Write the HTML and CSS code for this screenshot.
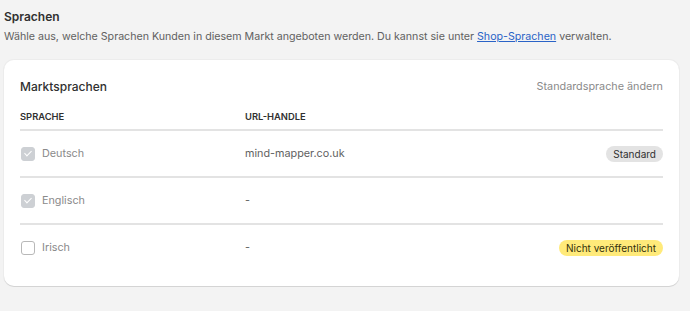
FILE: index.html
```html
<!DOCTYPE html>
<html lang="de">
<head>
    <meta charset="UTF-8">
    <meta name="viewport" content="width=device-width, initial-scale=1.0">
    <title>Sprachen</title>
    <link rel="stylesheet" href="styles.css">
</head>
<body>
    <section class="section-languages">
        <h2 class="section-title">Sprachen</h2>
        <p class="section-desc">Wähle aus, welche Sprachen Kunden in diesem Markt angeboten werden. Du kannst sie unter <a href="#">Shop-Sprachen</a> verwalten.</p>

        <article class="card">
            <div class="card-head">
                <h3>Marktsprachen</h3>
                <button type="button" class="btn-plain">Standardsprache ändern</button>
            </div>

            <div class="lang-table">
                <div class="row row-head">
                    <div class="cell">Sprache</div>
                    <div class="cell">URL-Handle</div>
                    <div class="cell"></div>
                </div>
                <div class="row">
                    <div class="cell cell-lang">
                        <span class="check checked"></span>
                        <span>Deutsch</span>
                    </div>
                    <div class="cell">mind-mapper.co.uk</div>
                    <div class="cell cell-end"><span class="badge">Standard</span></div>
                </div>
                <div class="row">
                    <div class="cell cell-lang">
                        <span class="check checked"></span>
                        <span>Englisch</span>
                    </div>
                    <div class="cell">-</div>
                    <div class="cell cell-end"></div>
                </div>
                <div class="row">
                    <div class="cell cell-lang">
                        <span class="check"></span>
                        <span>Irisch</span>
                    </div>
                    <div class="cell">-</div>
                    <div class="cell cell-end"><span class="badge badge-attention">Nicht veröffentlicht</span></div>
                </div>
            </div>
        </article>
    </section>
</body>
</html>
```

FILE: styles.css
```css
body {
    margin: 0;
    padding: 7px 11px 7px 4px;
    background: #f3f3f3;
    font-family: Inter, "Liberation Sans", sans-serif;
    color: #303030;
}

.section-title {
    margin: 0;
    font-size: 12px;
    line-height: 20px;
    font-weight: 600;
}

.section-desc {
    margin: 0 0 13px;
    font-size: 10.65px;
    line-height: 20px;
    color: #616161;
}

.section-desc a {
    color: #2a63c7;
}

.card {
    padding: 16px;
    background: #fff;
    border-radius: 10px;
    box-shadow: 0 1px 0 #d4d4d4, 0 0 0 1px #ececec;
}

.card-head {
    display: flex;
    justify-content: space-between;
    align-items: center;
    height: 20px;
    margin-bottom: 12px;
}

.card-head h3 {
    margin: 0;
    font-size: 12px;
    font-weight: 500;
}

.btn-plain {
    padding: 0;
    border: 0;
    background: none;
    font: inherit;
    font-size: 10.8px;
    color: #8a8a8a;
}

.row {
    display: grid;
    grid-template-columns: 225px 1fr auto;
    align-items: center;
    height: 45px;
    border-top: 2px solid #e3e3e3;
    font-size: 10.8px;
    color: #616161;
}

.row-head {
    height: 16px;
    padding-bottom: 5px;
    border-top: 0;
    font-size: 9.4px;
    font-weight: 600;
    text-transform: uppercase;
    color: #303030;
}

.cell-lang {
    display: flex;
    align-items: center;
    gap: 7px;
    color: #8a8a8a;
}

.check {
    box-sizing: border-box;
    width: 14px;
    height: 14px;
    margin-left: 1px;
    border: 1px solid #b8b8b8;
    border-radius: 3px;
    background: #fff;
    position: relative;
}

.check.checked {
    border-color: #cdd0d4;
    background: #cdd0d4;
}

.check.checked::after {
    content: "";
    position: absolute;
    left: 4px;
    top: 1.5px;
    width: 3px;
    height: 6px;
    border: solid #fff;
    border-width: 0 1.5px 1.5px 0;
    transform: rotate(45deg);
}

.cell-end {
    text-align: right;
}

.badge {
    display: inline-block;
    padding: 0 7px;
    border-radius: 8px;
    background: #e3e3e3;
    font-size: 10px;
    line-height: 16px;
    color: #303030;
}

.badge-attention {
    background: #ffea7a;
    color: #33300a;
}
```
